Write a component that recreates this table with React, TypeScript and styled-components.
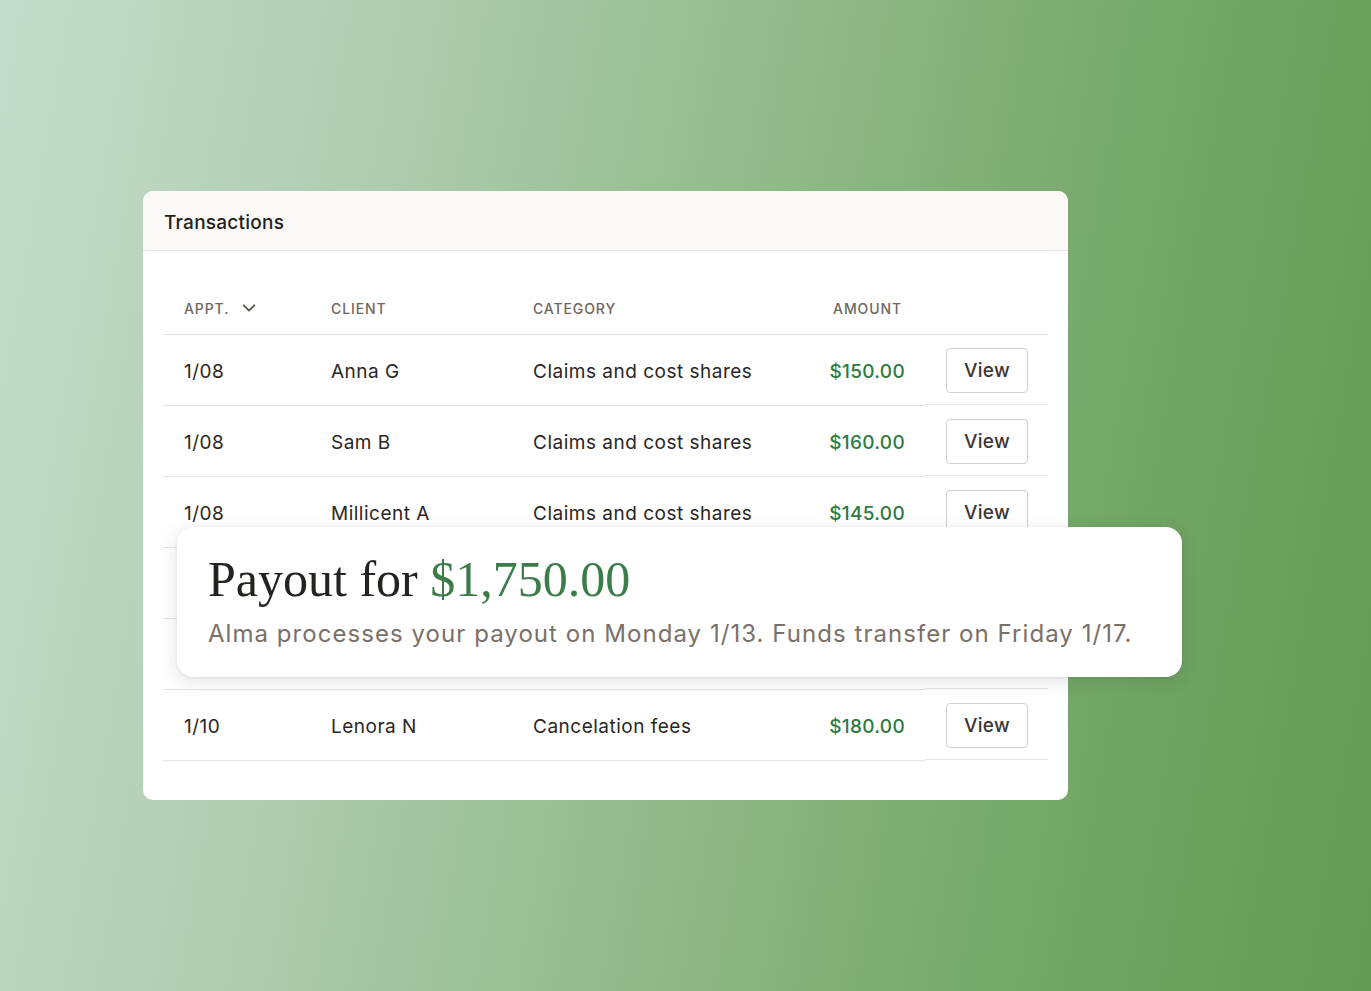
import React from 'react'
import styled, { createGlobalStyle } from 'styled-components'

const GlobalStyle = createGlobalStyle`
  html, body {
    margin: 0;
    padding: 0;
  }
  body {
    font-family: Inter, 'Noto Sans', sans-serif;
    -webkit-font-smoothing: antialiased;
  }
`

type Row = {
  appt: string
  client: string
  category: string
  amount: string
}

const rows: Row[] = [
  { appt: '1/08', client: 'Anna G', category: 'Claims and cost shares', amount: '$150.00' },
  { appt: '1/08', client: 'Sam B', category: 'Claims and cost shares', amount: '$160.00' },
  { appt: '1/08', client: 'Millicent A', category: 'Claims and cost shares', amount: '$145.00' },
  { appt: '1/09', client: 'Jordan K', category: 'Claims and cost shares', amount: '$155.00' },
  { appt: '1/09', client: 'Priya S', category: 'Claims and cost shares', amount: '$150.00' },
  { appt: '1/10', client: 'Lenora N', category: 'Cancelation fees', amount: '$180.00' },
]

const App = () => {
  return (
    <Page>
      <GlobalStyle />
      <Stage>
        <Card>
          <CardHeader>Transactions</CardHeader>
          <Table>
            <HeadCell>
              APPT.
              <svg width='18' height='18' viewBox='0 0 24 24' fill='none' stroke='currentColor' strokeWidth='2.6' strokeLinecap='round' strokeLinejoin='round'>
                <path d='M5 8.5l7 7 7-7' />
              </svg>
            </HeadCell>
            <HeadCell>CLIENT</HeadCell>
            <HeadCell>CATEGORY</HeadCell>
            <HeadCell $right>AMOUNT</HeadCell>
            <HeadCell />
            {rows.map((r, i) => (
              <React.Fragment key={i}>
                <Cell>{r.appt}</Cell>
                <Cell>{r.client}</Cell>
                <Cell>{r.category}</Cell>
                <Amount>{r.amount}</Amount>
                <ActionCell>
                  <ViewButton>View</ViewButton>
                </ActionCell>
              </React.Fragment>
            ))}
          </Table>
        </Card>
        <Payout>
          <PayoutTitle>
            Payout for <Green>$1,750.00</Green>
          </PayoutTitle>
          <PayoutText>
            Alma processes your payout on Monday 1/13. Funds transfer on Friday 1/17.
          </PayoutText>
        </Payout>
      </Stage>
    </Page>
  )
}

const Page = styled.div`
  width: 1371px;
  height: 991px;
  box-sizing: border-box;
  padding: 191px 0 0 143px;
  background: linear-gradient(100deg, #c4dccb 0%, #b0cdb1 25%, #93bb8c 50%, #76a86a 75%, #629a53 100%);
  overflow: hidden;
`

const Stage = styled.div`
  position: relative;
  width: 925px;
`

const Card = styled.div`
  width: 925px;
  background: #fff;
  border-radius: 10px;
  overflow: hidden;
  padding-bottom: 39px;
`

const CardHeader = styled.div`
  height: 60px;
  box-sizing: border-box;
  display: flex;
  align-items: center;
  padding: 3px 21px 0;
  background: #faf9f7;
  border-bottom: 1px solid #e6e3de;
  font-size: 19px;
  font-weight: 500;
  color: #231f1c;
  letter-spacing: 0.25px;
`

const Table = styled.div`
  display: grid;
  grid-template-columns: 147px 202px 278px 135px 123px;
  margin: 0 20px;
  padding-top: 33px;
`

const HeadCell = styled.div<{ $right?: boolean }>`
  height: 51px;
  box-sizing: border-box;
  display: flex;
  align-items: center;
  justify-content: ${(p) => (p.$right ? 'flex-end' : 'flex-start')};
  gap: 11px;
  padding: 0 ${(p) => (p.$right ? '23px' : '0')} 2px 21px;
  border-bottom: 1px solid #e6e3de;
  font-size: 14px;
  font-weight: 500;
  letter-spacing: 0.9px;
  color: #6e6761;
  svg {
    color: #5f5852;
  }
`

const Cell = styled.div`
  height: 71px;
  box-sizing: border-box;
  display: flex;
  align-items: center;
  padding-left: 21px;
  padding-top: 2px;
  border-bottom: 1px solid #e6e3de;
  font-size: 19px;
  color: #2a2623;
  letter-spacing: 0.5px;
`

const Amount = styled(Cell)`
  justify-content: flex-end;
  padding: 2px 20px 0 0;
  color: #2f7a3e;
  font-weight: 500;
  letter-spacing: 0.3px;
`

const ActionCell = styled(Cell)`
  height: 70px;
  margin-bottom: 1px;
  padding-left: 21px;
  padding-top: 1px;
`

const ViewButton = styled.button`
  width: 82px;
  height: 45px;
  border: 1px solid #d3cfca;
  border-radius: 4px;
  background: #fff;
  font-family: Inter, 'Noto Sans', sans-serif;
  font-size: 19px;
  font-weight: 500;
  color: #3b3633;
  padding: 0;
  letter-spacing: 0.3px;
`

const Payout = styled.div`
  position: absolute;
  left: 34px;
  top: 336px;
  width: 1005px;
  height: 150px;
  box-sizing: border-box;
  padding: 23px 31px 0;
  background: #fff;
  border-radius: 16px;
  box-shadow: 0 4px 18px rgba(40, 50, 40, 0.14), 0 1px 3px rgba(40, 50, 40, 0.08);
`

const PayoutTitle = styled.div`
  font-family: 'Liberation Serif', 'DejaVu Serif', serif;
  font-size: 50px;
  line-height: 58px;
  color: #262220;
`

const Green = styled.span`
  color: #3b7c48;
`

const PayoutText = styled.div`
  margin-top: 10px;
  font-size: 24px;
  line-height: 32px;
  color: #787069;
  letter-spacing: 1.05px;
`

export default App
